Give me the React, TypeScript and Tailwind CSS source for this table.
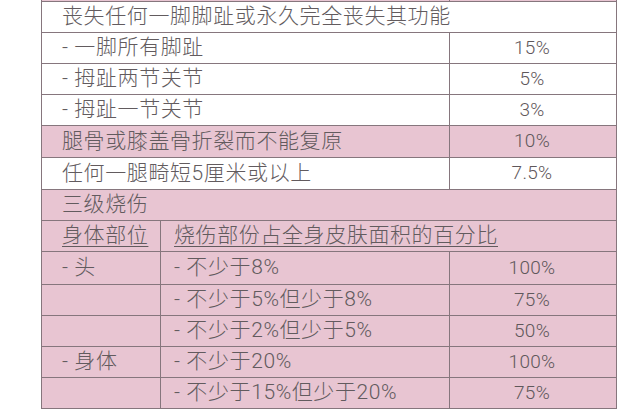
const PINK = "bg-[#e8c5d2]";
const WHITE = "bg-white";

function Row({
  bg,
  h,
  children,
}: {
  bg: string;
  h: string;
  children: React.ReactNode;
}) {
  return (
    <div className={`flex border-b border-[#86767d] ${bg} ${h}`}>{children}</div>
  );
}

function Full({ text }: { text: string }) {
  return <div className="flex items-center pl-[20px]">{text}</div>;
}

function Two({ label, value }: { label: string; value: string }) {
  return (
    <>
      <div className="flex w-[408px] items-center border-r border-[#86767d] pl-[20px]">
        {label}
      </div>
      <div className="flex flex-1 items-center justify-center pr-[2px] text-[19px] tracking-[0.3px] text-[#5f585b]">
        {value}
      </div>
    </>
  );
}

function Three({
  part,
  range,
  value,
}: {
  part: string;
  range: string;
  value: string;
}) {
  return (
    <>
      <div className="flex w-[119px] items-center border-r border-[#86767d] pl-[20px]">
        {part}
      </div>
      <div className="flex w-[289px] items-center border-r border-[#86767d] pl-[13px]">
        {range}
      </div>
      <div className="flex flex-1 items-center justify-center pr-[2px] text-[19px] tracking-[0.3px] text-[#5f585b]">
        {value}
      </div>
    </>
  );
}

export default function App() {
  return (
    <div className="h-[409px] w-[636px] overflow-hidden bg-white font-['Roboto','Noto_Sans_CJK_SC',sans-serif] text-[21px] font-light tracking-[0.6px] text-[#625b5e]">
      <div className="ml-[41px] -mt-[30px] w-[576px] border-x border-[#86767d]">
        <Row bg={PINK} h="h-[32px]">
          <Two label="" value="" />
        </Row>
        <Row bg={WHITE} h="h-[31px]">
          <Full text="丧失任何一脚脚趾或永久完全丧失其功能" />
        </Row>
        <Row bg={WHITE} h="h-[31px]">
          <Two label="- 一脚所有脚趾" value="15%" />
        </Row>
        <Row bg={WHITE} h="h-[31px]">
          <Two label="- 拇趾两节关节" value="5%" />
        </Row>
        <Row bg={WHITE} h="h-[31px]">
          <Two label="- 拇趾一节关节" value="3%" />
        </Row>
        <Row bg={PINK} h="h-[32px]">
          <Two label="腿骨或膝盖骨折裂而不能复原" value="10%" />
        </Row>
        <Row bg={WHITE} h="h-[32px]">
          <Two label="任何一腿畸短5厘米或以上" value="7.5%" />
        </Row>
        <Row bg={PINK} h="h-[31px]">
          <Full text="三级烧伤" />
        </Row>
        <Row bg={PINK} h="h-[31px]">
          <div className="flex w-[119px] items-center border-r border-[#86767d] pl-[20px]">
            <span className="underline decoration-1 underline-offset-[4px]">身体部位</span>
          </div>
          <div className="flex flex-1 items-center pl-[13px]">
            <span className="underline decoration-1 underline-offset-[4px]">
              烧伤部份占全身皮肤面积的百分比
            </span>
          </div>
        </Row>
        <Row bg={PINK} h="h-[33px]">
          <Three part="- 头" range="- 不少于8%" value="100%" />
        </Row>
        <Row bg={PINK} h="h-[31px]">
          <Three part="" range="- 不少于5%但少于8%" value="75%" />
        </Row>
        <Row bg={PINK} h="h-[31px]">
          <Three part="" range="- 不少于2%但少于5%" value="50%" />
        </Row>
        <Row bg={PINK} h="h-[31px]">
          <Three part="- 身体" range="- 不少于20%" value="100%" />
        </Row>
        <Row bg={PINK} h="h-[31px]">
          <Three part="" range="- 不少于15%但少于20%" value="75%" />
        </Row>
      </div>
    </div>
  );
}
